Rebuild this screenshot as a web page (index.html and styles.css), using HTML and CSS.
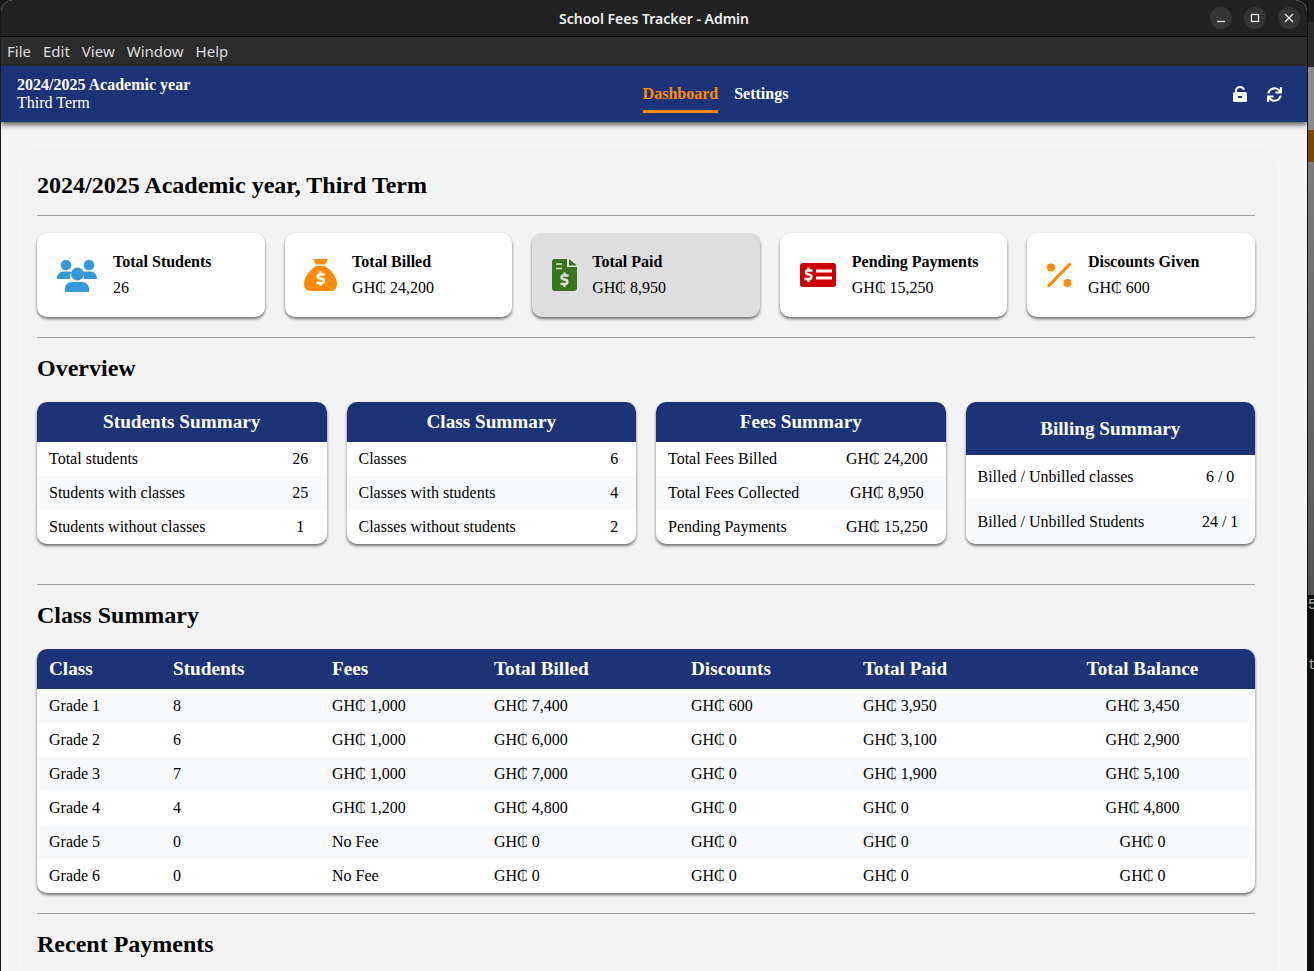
FILE: index.html
```html
<!DOCTYPE html>
<html>
<head>
    <title>School Fees Tracker - Admin</title>
    <link rel="stylesheet" href="styles.css">
</head>

<body>
    <div class="window">
        <!-- Title bar -->
        <div class="titlebar">
            <span class="title">School Fees Tracker - Admin</span>
            <div class="win-controls">
                <button class="win-btn"><svg width="10" height="10" viewBox="0 0 10 10"><path d="M1 8.5H9" stroke="#eee" stroke-width="1.2"/></svg></button>
                <button class="win-btn"><svg width="10" height="10" viewBox="0 0 10 10"><rect x="1.5" y="1.5" width="7" height="7" fill="none" stroke="#eee" stroke-width="1.2"/></svg></button>
                <button class="win-btn"><svg width="10" height="10" viewBox="0 0 10 10"><path d="M1 1L9 9M9 1L1 9" stroke="#eee" stroke-width="1.2"/></svg></button>
            </div>
        </div>

        <div class="menubar">
            <span>File</span>
            <span>Edit</span>
            <span>View</span>
            <span>Window</span>
            <span>Help</span>
        </div>

        <!-- Top Navigation Bar -->
        <header class="navbar">
            <div class="term">
                <strong>2024/2025 Academic year</strong>
                <span>Third Term</span>
            </div>
            <nav class="nav-links">
                <a class="active">Dashboard</a>
                <a>Settings</a>
            </nav>
            <div class="nav-icons">
                <svg width="14" height="16" viewBox="0 0 14 16">
                    <rect x="0" y="6" width="14" height="10" rx="1.5" fill="#fff"/>
                    <path d="M3 6.5V4.5C3 2.5 4.8 1 7 1C9 1 10.5 2 11 3.8" fill="none" stroke="#fff" stroke-width="2"/>
                    <rect x="5" y="10" width="4" height="2" fill="#1c3378"/>
                </svg>
                <svg width="15" height="15" viewBox="0 0 512 512">
                    <path fill="#fff" d="M440.65 12.57l4 82.77A247.16 247.16 0 0 0 255.83 8C134.73 8 33.91 94.92 12.29 209.82A12 12 0 0 0 24.09 224h49.05a12 12 0 0 0 11.67-9.26 175.91 175.91 0 0 1 317-56.94l-101.46-4.86a12 12 0 0 0-12.57 12v47.41a12 12 0 0 0 12 12H500a12 12 0 0 0 12-12V12a12 12 0 0 0-12-12h-47.37a12 12 0 0 0-11.98 12.57zM255.83 432a175.61 175.61 0 0 1-146-77.8l101.8 4.87a12 12 0 0 0 12.57-12v-47.4a12 12 0 0 0-12-12H12a12 12 0 0 0-12 12V500a12 12 0 0 0 12 12h47.35a12 12 0 0 0 12-12.6l-4.15-82.57A247.17 247.17 0 0 0 255.83 504c121.11 0 221.93-86.92 243.55-201.82a12 12 0 0 0-11.8-14.18h-49.05a12 12 0 0 0-11.67 9.26A175.86 175.86 0 0 1 255.83 432z"/>
                </svg>
            </div>
        </header>

        <!-- Main Content Section -->
        <main class="page">
            <div class="panel">
                <h2>2024/2025 Academic year, Third Term</h2>
                <hr class="rule-top">

                <div class="stats">
                    <div class="stat-card">
                        <svg width="40" height="33" viewBox="0 0 40 33" fill="#3498db">
                            <circle cx="9" cy="6" r="5.3"/>
                            <circle cx="32" cy="6" r="5.3"/>
                            <circle cx="20.5" cy="15" r="6.5"/>
                            <path d="M0 20C0 15 3 12.5 7 12.5H11C12.5 12.5 13.5 13 14.5 13.5C13 15 12.5 17.5 13 20Z"/>
                            <path d="M40 20C40 15 37 12.5 33 12.5H29C27.5 12.5 26.5 13 25.5 13.5C27 15 27.5 17.5 27 20Z"/>
                            <path d="M8 33V30C8 26 11 23 15 23H25C29 23 32 26 32 30V33Z"/>
                        </svg>
                        <div class="stat-text">
                            <strong>Total Students</strong>
                            <span>26</span>
                        </div>
                    </div>
                    <div class="stat-card">
                        <svg class="icon-sack" width="33" height="32" viewBox="0 0 33 32">
                            <path fill="#ff8c00" d="M9 0H24L21 5.5H12Z"/>
                            <path fill="#ff8c00" d="M12 7H21C27 11 33 18 33 25C33 29 30 32 27 32H6C3 32 0 29 0 25C0 18 6 11 12 7Z"/>
                            <path fill="none" stroke="#fff" stroke-width="2.4" d="M20.5 15.5H15C13.3 15.5 12.8 18.5 15 19L18.5 20C20.7 20.7 20 24 18 24H12.5M16.5 12.5V15.5M16.5 24V27"/>
                        </svg>
                        <div class="stat-text">
                            <strong>Total Billed</strong>
                            <span>GH₵ 24,200</span>
                        </div>
                    </div>
                    <div class="stat-card selected">
                        <svg class="icon-file" width="25" height="32" viewBox="0 0 25 32">
                            <path fill="#38761d" d="M3 0H15V8H25V29C25 31 24 32 22 32H3C1 32 0 31 0 29V3C0 1 1 0 3 0Z"/>
                            <path fill="#38761d" d="M17 0L25 6.5H17Z"/>
                            <path fill="none" stroke="#dedede" stroke-width="1.6" d="M4 5H10M4 9.5H10"/>
                            <path fill="none" stroke="#dedede" stroke-width="2.4" d="M16.5 16.5H11C9.3 16.5 8.8 19.5 11 20L14 21C16.2 21.7 15.5 25 13.5 25H8.5M12.5 13.5V16.5M12.5 25V28"/>
                        </svg>
                        <div class="stat-text">
                            <strong>Total Paid</strong>
                            <span>GH₵ 8,950</span>
                        </div>
                    </div>
                    <div class="stat-card">
                        <svg width="36" height="24" viewBox="0 0 36 24">
                            <rect width="36" height="24" rx="3" fill="#cc0000"/>
                            <path fill="none" stroke="#fff" stroke-width="2.4" d="M12.5 7.5H7.5C5.8 7.5 5.3 10.5 7.5 11L10 12C12.2 12.7 11.5 16 9.5 16H4.5M8.5 4.5V7.5M8.5 16V19"/>
                            <path fill="none" stroke="#fff" stroke-width="3" d="M16 8H32M16 15H32"/>
                        </svg>
                        <div class="stat-text">
                            <strong>Pending Payments</strong>
                            <span>GH₵ 15,250</span>
                        </div>
                    </div>
                    <div class="stat-card">
                        <svg class="icon-percent" width="25" height="24" viewBox="0 0 25 24" fill="#ff8c00">
                            <circle cx="4" cy="4.5" r="4"/>
                            <circle cx="20.5" cy="20" r="4"/>
                            <path d="M22.5 1.5L2 22.5" stroke="#ff8c00" stroke-width="3.2" stroke-linecap="round"/>
                        </svg>
                        <div class="stat-text">
                            <strong>Discounts Given</strong>
                            <span>GH₵ 600</span>
                        </div>
                    </div>
                </div>

                <hr class="rule-mid">
                <h2>Overview</h2>

                <div class="summaries">
                    <div class="summary-card">
                        <table class="summary">
                            <tr><th colspan="2">Students Summary</th></tr>
                            <tr><td>Total students</td><td>26</td></tr>
                            <tr><td>Students with classes</td><td>25</td></tr>
                            <tr><td>Students without classes</td><td>1</td></tr>
                        </table>
                    </div>
                    <div class="summary-card">
                        <table class="summary">
                            <tr><th colspan="2">Class Summary</th></tr>
                            <tr><td>Classes</td><td>6</td></tr>
                            <tr><td>Classes with students</td><td>4</td></tr>
                            <tr><td>Classes without students</td><td>2</td></tr>
                        </table>
                    </div>
                    <div class="summary-card">
                        <table class="summary">
                            <tr><th colspan="2">Fees Summary</th></tr>
                            <tr><td>Total Fees Billed</td><td>GH₵ 24,200</td></tr>
                            <tr><td>Total Fees Collected</td><td>GH₵ 8,950</td></tr>
                            <tr><td>Pending Payments</td><td>GH₵ 15,250</td></tr>
                        </table>
                    </div>
                    <div class="summary-card">
                        <table class="summary billing">
                            <tr><th colspan="2">Billing Summary</th></tr>
                            <tr><td>Billed / Unbilled classes</td><td>6 / 0</td></tr>
                            <tr><td>Billed / Unbilled Students</td><td>24 / 1</td></tr>
                        </table>
                    </div>
                </div>

                <hr class="rule-low">
                <h2>Class Summary</h2>

                <div class="table-card">
                    <table class="classes">
                        <thead>
                            <tr>
                                <th>Class</th>
                                <th>Students</th>
                                <th>Fees</th>
                                <th>Total Billed</th>
                                <th>Discounts</th>
                                <th>Total Paid</th>
                                <th>Total Balance</th>
                            </tr>
                        </thead>
                        <tbody>
                            <tr><td>Grade 1</td><td>8</td><td>GH₵ 1,000</td><td>GH₵ 7,400</td><td>GH₵ 600</td><td>GH₵ 3,950</td><td>GH₵ 3,450</td></tr>
                            <tr><td>Grade 2</td><td>6</td><td>GH₵ 1,000</td><td>GH₵ 6,000</td><td>GH₵ 0</td><td>GH₵ 3,100</td><td>GH₵ 2,900</td></tr>
                            <tr><td>Grade 3</td><td>7</td><td>GH₵ 1,000</td><td>GH₵ 7,000</td><td>GH₵ 0</td><td>GH₵ 1,900</td><td>GH₵ 5,100</td></tr>
                            <tr><td>Grade 4</td><td>4</td><td>GH₵ 1,200</td><td>GH₵ 4,800</td><td>GH₵ 0</td><td>GH₵ 0</td><td>GH₵ 4,800</td></tr>
                            <tr><td>Grade 5</td><td>0</td><td>No Fee</td><td>GH₵ 0</td><td>GH₵ 0</td><td>GH₵ 0</td><td>GH₵ 0</td></tr>
                            <tr><td>Grade 6</td><td>0</td><td>No Fee</td><td>GH₵ 0</td><td>GH₵ 0</td><td>GH₵ 0</td><td>GH₵ 0</td></tr>
                        </tbody>
                    </table>
                </div>

                <hr class="rule-mid">
                <h2>Recent Payments</h2>
            </div>
        </main>
    </div>

    <!-- Bit of the desktop showing behind the window -->
    <aside class="desktop">
        <div class="d-top"></div>
        <div class="d-bar"></div>
        <div class="d-gray"></div>
        <div class="d-orange"></div>
        <div class="d-fade"></div>
        <div class="d-term">
            <span>5</span>
            <span>t</span>
        </div>
    </aside>
</body>
</html>
```

FILE: styles.css
```css
/* General Styles */
html, body {
    height: 100%;
}

body {
    margin: 0;
    display: flex;
    overflow: hidden;
    background: #1a1a1a;
    font-family: "Liberation Serif", "Times New Roman", serif;
    font-size: 16px;
    color: #000;
}

/* Window frame */
.window {
    width: 1306px;
    margin-left: 1px;
    flex-shrink: 0;
    display: flex;
    flex-direction: column;
    overflow: hidden;
    border-radius: 12px 12px 0 0;
    background: #f4f4f4;
}

.titlebar {
    height: 36px;
    flex-shrink: 0;
    display: flex;
    align-items: center;
    justify-content: flex-end;
    position: relative;
    background: #222222;
    border-bottom: 1px solid #0c0c0c;
}

.title {
    position: absolute;
    left: 0;
    right: 0;
    text-align: center;
    font-family: "Noto Sans", sans-serif;
    font-size: 14px;
    font-weight: 600;
    color: #f0f0f0;
}

.win-controls {
    display: flex;
    gap: 12px;
    padding-right: 7px;
    position: relative;
}

.win-btn {
    width: 22px;
    height: 22px;
    padding: 0;
    border: none;
    border-radius: 50%;
    background: #353535;
    display: flex;
    align-items: center;
    justify-content: center;
}

.menubar {
    height: 29px;
    flex-shrink: 0;
    display: flex;
    align-items: center;
    gap: 12px;
    padding: 0 0 2px 6px;
    box-sizing: border-box;
    background: #2c2c2c;
    font-family: "Noto Sans", sans-serif;
    font-size: 15px;
    color: #dddddd;
}

/* Navigation Bar Styling */
.navbar {
    height: 56px;
    flex-shrink: 0;
    display: flex;
    justify-content: space-between;
    align-items: center;
    padding: 0 25px 0 16px;
    background: #1c3378;
    color: white;
    box-shadow: 0 3px 5px rgba(0, 0, 0, 0.6);
    position: relative;
}

.term {
    width: 181px;
    display: flex;
    flex-direction: column;
}

.nav-links {
    display: flex;
    gap: 16px;
    font-weight: bold;
}

.nav-links a {
    padding: 10px 0 7px;
    border-bottom: 3px solid transparent;
}

.nav-links a.active {
    color: #ff8c00;
    border-bottom-color: #ff8c00;
}

.nav-icons {
    display: flex;
    align-items: center;
    gap: 20px;
}

/* Content area */
.page {
    flex-grow: 1;
    overflow: hidden;
    padding: 29px 31px 0 15px;
}

.panel {
    padding: 20px;
    background: #f3f3f3;
    border: 1px solid #f0f0f0;
    border-radius: 12px;
}

h2 {
    margin: 0;
    font-size: 24px;
    line-height: 27px;
}

hr {
    border: none;
    border-top: 1px solid #a0a0a0;
    margin: 0;
}

.rule-top {
    margin: 16px 0 17px;
}

.rule-mid {
    margin: 20px 0 17px;
}

.rule-low {
    margin: 40px 0 17px;
}

/* Stat cards */
.stats {
    display: grid;
    grid-template-columns: repeat(5, 1fr);
    gap: 20px;
}

.stat-card {
    height: 84px;
    box-sizing: border-box;
    display: flex;
    align-items: center;
    gap: 16px;
    padding: 0 20px;
    background: white;
    border-radius: 10px;
    box-shadow: 0 2px 3px rgba(0, 0, 0, 0.55);
}

.stat-card.selected {
    background: #dedede;
}

.icon-sack {
    margin: 0 -0.5px 0 -1px;
}

.icon-file {
    margin-right: -1px;
}

.icon-percent {
    margin-right: -0.5px;
}

.stat-text {
    display: flex;
    flex-direction: column;
    gap: 8px;
}

/* Summary cards */
.summaries {
    display: grid;
    grid-template-columns: repeat(4, 1fr);
    gap: 20px;
    margin-top: 20px;
}

.summary-card,
.table-card {
    border-radius: 10px;
    overflow: hidden;
    background: white;
    box-shadow: 0 2px 3px rgba(0, 0, 0, 0.55);
}

.table-card {
    margin-top: 20px;
}

table {
    width: 100%;
    border-collapse: collapse;
}

.summary {
    height: 100%;
}

th {
    box-sizing: border-box;
    background: #1c3378;
    color: white;
    font-size: 19.2px;
    padding: 9px 12px;
    line-height: 22px;
}

td {
    padding: 8px 12px;
    line-height: 18px;
}

.billing th {
    padding: 10px 12px 8px;
}

.summary td:last-child {
    text-align: center;
}

.summary tr:nth-child(odd) {
    background: #f8fafc;
}

.classes {
    table-layout: fixed;
}

.classes th {
    text-align: left;
}

.classes th:nth-child(1) { width: 124px; }
.classes th:nth-child(2) { width: 159px; }
.classes th:nth-child(3) { width: 162px; }
.classes th:nth-child(4) { width: 197px; }
.classes th:nth-child(5) { width: 172px; }
.classes th:nth-child(6) { width: 179px; }

.classes th:last-child,
.classes td:last-child {
    text-align: center;
}

.classes tbody tr:nth-child(odd) {
    background: #f8fafc;
}

/* Desktop strip to the right of the window */
.desktop {
    flex-grow: 1;
    display: flex;
    flex-direction: column;
    overflow: hidden;
    border-left: 1px solid #111;
}

.d-top { height: 22px; background: #1a1a1a; }
.d-bar { height: 45px; background: #2a2a2a; }
.d-gray { height: 63px; background: #8a8a8a; }
.d-orange { height: 32px; background: #7a4a00; }
.d-fade { height: 433px; background: linear-gradient(#7c7c7c, #555555); }

.d-term {
    flex-grow: 1;
    display: flex;
    flex-direction: column;
    gap: 44px;
    padding-top: 2px;
    background: #111111;
    font-family: "Liberation Mono", monospace;
    font-size: 14px;
    color: #b0b0b0;
}
```
